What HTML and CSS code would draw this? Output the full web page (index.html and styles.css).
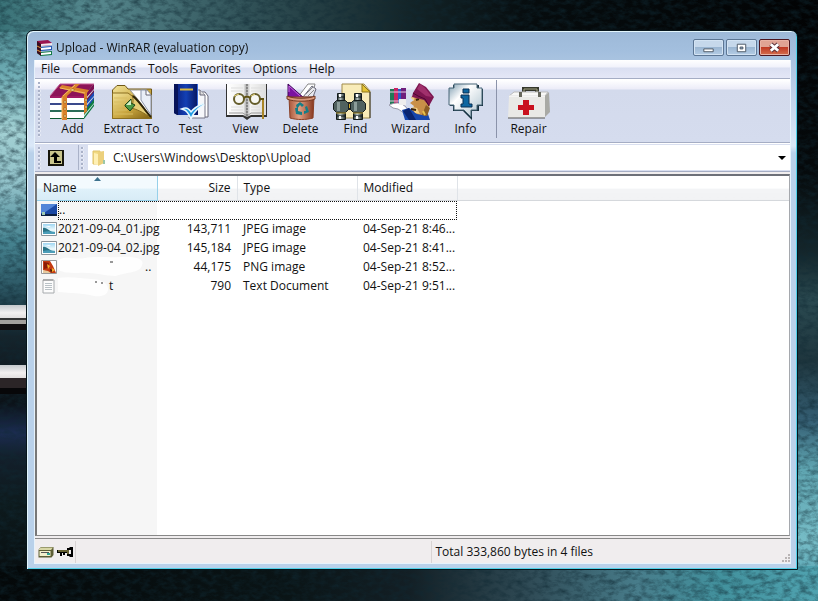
FILE: index.html
```html
<!DOCTYPE html>
<html lang="en">
<head>
<meta charset="utf-8">
<title>Upload - WinRAR (evaluation copy)</title>
<link rel="stylesheet" href="styles.css">
</head>
<body>
<svg class="wallpaper" viewBox="0 0 818 601" preserveAspectRatio="none" aria-hidden="true">
  <defs>
    <linearGradient id="wl" x1="0" y1="0" x2="0" y2="1">
      <stop offset="0" stop-color="#3a7378"/><stop offset=".05" stop-color="#4f8a91"/><stop offset=".12" stop-color="#6cabb3"/><stop offset=".22" stop-color="#a2d0d3"/><stop offset=".31" stop-color="#8fc0c8"/><stop offset=".4" stop-color="#478592"/><stop offset=".47" stop-color="#2f5c69"/><stop offset=".5" stop-color="#234652"/><stop offset=".56" stop-color="#15242c"/><stop offset=".67" stop-color="#0b1218"/><stop offset=".72" stop-color="#1b2c50"/><stop offset=".76" stop-color="#131f2b"/><stop offset=".84" stop-color="#0d1a1d"/><stop offset="1" stop-color="#05090b"/>
    </linearGradient>
    <linearGradient id="wr" x1="0" y1="0" x2="0" y2="1">
      <stop offset="0" stop-color="#020304"/><stop offset=".28" stop-color="#05090b"/><stop offset=".42" stop-color="#14262b"/><stop offset=".5" stop-color="#2a4950"/><stop offset=".6" stop-color="#1f363e"/><stop offset=".7" stop-color="#355f74"/><stop offset=".78" stop-color="#5fa5b1"/><stop offset=".9" stop-color="#76bcc6"/><stop offset="1" stop-color="#4b9aaa"/>
    </linearGradient>
    <linearGradient id="wt">
      <stop offset="0" stop-color="#3a7378"/><stop offset=".12" stop-color="#56888e"/><stop offset=".3" stop-color="#315258"/><stop offset=".5" stop-color="#132428"/><stop offset=".65" stop-color="#060c0e"/><stop offset="1" stop-color="#020304"/>
    </linearGradient>
    <linearGradient id="wb">
      <stop offset="0" stop-color="#040809"/><stop offset=".35" stop-color="#0a1416"/><stop offset=".5" stop-color="#131f25"/><stop offset=".65" stop-color="#304c57"/><stop offset=".78" stop-color="#487d8b"/><stop offset=".88" stop-color="#42919d"/><stop offset="1" stop-color="#50a3b0"/>
    </linearGradient>
    <linearGradient id="bar" x1="0" y1="0" x2="0" y2="1">
      <stop offset="0" stop-color="#c4c8cc"/><stop offset=".6" stop-color="#f2f0f0"/><stop offset="1" stop-color="#e0dede"/>
    </linearGradient>
    <filter id="grain" x="0" y="0" width="100%" height="100%" color-interpolation-filters="sRGB">
      <feTurbulence type="fractalNoise" baseFrequency=".12 .2" numOctaves="4" seed="7"/>
      <feColorMatrix values="0 0 0 0 .06  0 0 0 0 .16  0 0 0 0 .2  1.2 0 0 0 -.46"/>
    </filter>
  </defs>
  <rect width="409" height="601" fill="url(#wl)"/>
  <rect x="409" width="409" height="601" fill="url(#wr)"/>
  <rect width="818" height="32" fill="url(#wt)"/>
  <rect y="566" width="818" height="35" fill="url(#wb)"/>
  <rect width="818" height="601" filter="url(#grain)"/>
  <rect y="305" width="40" height="13" fill="url(#bar)"/>
  <rect y="318" width="40" height="2" fill="#333"/>
  <rect y="320" width="40" height="4" fill="#a3a19e"/>
  <rect y="324" width="40" height="6" fill="#110f11"/>
  <rect y="365" width="40" height="13" fill="url(#bar)"/>
  <rect y="378" width="40" height="10" fill="#2b2527"/>
  <rect y="388" width="40" height="6" fill="#070709"/>
</svg>

<svg class="defs" aria-hidden="true">
  <defs>
    <linearGradient id="gold" x1="0" y1="0" x2="1" y2="1"><stop offset="0" stop-color="#f3e49a"/><stop offset=".55" stop-color="#c9a63f"/><stop offset="1" stop-color="#7d5f12"/></linearGradient>
    <linearGradient id="blue" x1="0" y1="0" x2="1" y2="0"><stop offset="0" stop-color="#0a1c78"/><stop offset=".5" stop-color="#1440b4"/><stop offset="1" stop-color="#06145e"/></linearGradient>
    <linearGradient id="pail" x1="0" y1="0" x2="1" y2="0"><stop offset="0" stop-color="#a8563a"/><stop offset=".4" stop-color="#e0a184"/><stop offset="1" stop-color="#86371f"/></linearGradient>
    <linearGradient id="tube" x1="0" y1="0" x2="1" y2="0"><stop offset="0" stop-color="#2a3535"/><stop offset=".4" stop-color="#b9c6c3"/><stop offset="1" stop-color="#1c2424"/></linearGradient>
    <linearGradient id="steel" x1="0" y1="0" x2="1" y2="1"><stop offset="0" stop-color="#7e9db0"/><stop offset=".35" stop-color="#fff"/><stop offset="1" stop-color="#a9bfcb"/></linearGradient>
    <linearGradient id="page" x1="0" y1="0" x2="1" y2="0"><stop offset="0" stop-color="#fff"/><stop offset=".42" stop-color="#eee"/><stop offset=".5" stop-color="#aaa"/><stop offset=".6" stop-color="#f4f4f4"/><stop offset="1" stop-color="#ddd"/></linearGradient>
    <linearGradient id="sky" x1="0" y1="0" x2="0" y2="1"><stop offset="0" stop-color="#9fd6f2"/><stop offset=".6" stop-color="#eefafd"/><stop offset="1" stop-color="#b5dbe4"/></linearGradient>
    <symbol id="photo" viewBox="0 0 16 16">
      <path d="M.5 1.500h15v13H.5z" fill="#fff" stroke="#8b949b"/><path d="M2 3h12v10H2z" fill="url(#sky)"/>
      <path d="M2 7c3-1 5 2 9 4H2z" fill="#2a7386"/><path d="M2 11c3-1 8-1 12 0v2H2z" fill="#4b9db8"/><path d="M4 5h6l-2 1z" fill="#fff"/>
    </symbol>
    <symbol id="tubes" viewBox="0 0 18 28">
      <g fill="url(#tube)" stroke="#151c1c"><path d="M5.500 1.500h7v8h-7z"/><path d="M4.500 18.500h9v9h-9z"/></g>
      <path d="M4.500 8.500h9l3 3v6l-3 3h-9l-3-3v-6z" fill="#50615f" stroke="#151c1c"/>
      <path d="M5 10h3v9H5z" fill="#8b9c99"/><path d="M5 5h8M4 24h10" stroke="#0d1414"/><path d="M4 21h10" stroke="#b79b34"/><path d="M8 24v3M8 2v3" stroke="#fff" stroke-width="2"/>
    </symbol>
  </defs>
</svg>

<main class="window">
  <header class="titlebar">
    <svg class="i16" viewBox="0 0 16 16" aria-hidden="true">
      <path d="M1 1l11-1 4 3v2L5 6 1 4z" fill="#9a1450"/><path d="M5 4l11-1v2L5 6z" fill="#f3e9ee"/>
      <path d="M1 5l4 2 11-1v4L5 11 1 8z" fill="#2457b5"/><path d="M5 8l10-1v2L5 10z" fill="#fff"/>
      <path d="M1 9l4 3 11-1v4L5 16l-4-3z" fill="#137b45"/><path d="M5 13l10-1v2L5 15z" fill="#fff"/>
      <path d="M1 1l4 3v12l-4-3z" fill="#3a0d20"/><path d="M1 6l4 2M1 10l4 2" stroke="#e49a3a"/>
    </svg>
    <h1>Upload - WinRAR (evaluation copy)</h1>
    <div class="captions">
      <button class="cap" type="button" aria-label="Minimize"><svg viewBox="0 0 30 16"><path d="M10 9.500h10v3H10z" fill="#fff" stroke="#4a5563"/></svg></button>
      <button class="cap" type="button" aria-label="Maximize"><svg viewBox="0 0 30 16"><path d="M10.500 4.500h9v8h-9z" fill="#fff" stroke="#4a5563"/><path d="M13.500 7.500h3v2h-3z" fill="#93abc6" stroke="#4a5563"/></svg></button>
      <button class="cap close" type="button" aria-label="Close"><svg viewBox="0 0 30 16"><path d="M11 4.500l8 7M19 4.500l-8 7" stroke="#5a3038" stroke-width="5"/><path d="M11 4.500l8 7M19 4.500l-8 7" stroke="#fff" stroke-width="3"/></svg></button>
    </div>
  </header>

  <div class="client">
    <nav class="menu" aria-label="Menu">
      <button type="button">File</button><button type="button">Commands</button><button type="button">Tools</button><button type="button">Favorites</button><button type="button">Options</button><button type="button">Help</button>
    </nav>

    <div class="toolbar" role="toolbar" aria-label="Archive tools">
      <span class="grip"></span>
      <button class="tool" type="button">
        <svg viewBox="0 0 48 38" aria-hidden="true">
          <path d="M35 13L45 1v22L35 36z" fill="#0d7a44"/><path d="M35 13L45 1v8L35 21z" fill="#7c0d52"/><path d="M35 21L45 9v7L35 29z" fill="#1c49b8"/>
          <path d="M35 17l10-11v1L35 19zM35 24l10-11v1L35 26zM35 32l10-12v1L35 34z" fill="#cfe4df"/>
          <path d="M1 13L11 1h34L35 13z" fill="#8d1459"/><path d="M1 13L11 1h34" fill="none" stroke="#c55f96"/>
          <path d="M1 13h34v23H1z" fill="#fff"/>
          <path d="M1 13h34v2H1z" fill="#a01a66"/><path d="M1 20h34v2H1z" fill="#3a4a8c"/><path d="M1 27h34v2H1z" fill="#2a6d58"/><path d="M1 35h34v1H1z" fill="#0b5a32"/>
          <path d="M13 13L26 1h5L18 13v24h-5z" fill="#d9822b"/><path d="M10 5l3-3 27 5-2 3v18l-3 3V11z" fill="#d9822b"/><path d="M13 14v22M26 2L14 13M11 5l25 5" stroke="#f3bb63" fill="none"/>
          <path d="M15 18h2v2h-2zM15 25h2v2h-2zM15 32h2v2h-2zM22 6h3v2h-3zM36 16h2v2h-2zM36 23h2v2h-2z" fill="#fff0a0" stroke="#8a4d10" stroke-width=".5"/>
        </svg>Add</button>
      <button class="tool wide" type="button">
        <svg viewBox="0 0 48 38" aria-hidden="true">
          <path d="M4.500 35.500V7L9 2.500h8L20 6h23.500v29.500z" fill="url(#gold)" stroke="#6e5718"/>
          <path d="M22 7h16l5 5v22L28 14z" fill="#fff" stroke="#999"/><path d="M33 7h6l4 5v20L33 17z" fill="#e9eef8" stroke="#8a93a8"/><path d="M38 7v5h5" fill="#fff" stroke="#667"/>
          <path d="M4.500 35.500V10H20l4 3c8 6 12 14 19.500 22.500z" fill="url(#gold)" stroke="#8a6e20"/>
          <path d="M24 12c8 6 13 16 19 23-8-6-15-9-20-10 2-4 3-8 1-13z" fill="#e4cd76" stroke="#8a6e20"/><path d="M25 13c8 7 12 15 18 21" fill="none" stroke="#2d2408" stroke-width="2"/>
          <path d="M6 15h13M6 19h11M6 23h9M6 27h13M6 31h19" stroke="#d8bd62"/>
          <path d="M17 22l6-6v4l4 2-5 6-5-5z" fill="#4d9a46" stroke="#1e4318"/><path d="M18 22l5-5v5z" fill="#d6f0c8"/>
        </svg>Extract To</button>
      <button class="tool" type="button">
        <svg viewBox="0 0 48 38" aria-hidden="true">
          <path d="M28 9h10l3 4v21H28z" fill="#fff" stroke="#667"/><path d="M22 7h11l5 5v23H22z" fill="#f6f7fa" stroke="#778"/><path d="M33 7v5h5" fill="#ddd" stroke="#667"/>
          <path d="M7 1h24v31H10l-3-2z" fill="url(#blue)"/><path d="M7 1v29l3 2h1V1z" fill="#071358"/><path d="M10 32h14v2H10l-3-3z" fill="#cfd8ea"/>
          <path d="M13 6.500h13" stroke="#d9b942" stroke-width="2"/><path d="M30.500 1v22" stroke="#3568d8"/>
          <path d="M17 26c3 1 5 4 7 8 3-6 7-10 13-13-5 2-10 5-13 9-2-3-4-5-7-4z" fill="#44b8f0" stroke="#e9f8ff" stroke-width="3"/><path d="M17 26c3 1 5 4 7 8 3-6 7-10 13-13-5 2-10 5-13 9-2-3-4-5-7-4z" fill="#229ce4"/>
        </svg>Test</button>
      <button class="tool" type="button">
        <svg viewBox="0 0 48 38" aria-hidden="true">
          <path d="M4 1h41v33H29l-4 3-4-3H4z" fill="#333"/><path d="M5 1h39v31H29l-4 2-4-2H5z" fill="url(#page)"/>
          <path d="M7 30h14l4 3 4-3h13" fill="none" stroke="#999"/><path d="M25 1v32" stroke="#777" stroke-width="1.500" stroke-dasharray="2 1"/>
          <path d="M9 5h12M9 8h12M29 5h11M29 8h11M9 24h12M9 27h12M29 24h9M29 27h9" stroke="#ddd"/>
          <g fill="#f7f7f3" stroke="#645c2a" stroke-width="2"><circle cx="17" cy="16" r="5"/><circle cx="33" cy="16" r="5"/></g><path d="M22 15c2-2 4-2 6 0M38 16h3v12" fill="none" stroke="#5f5212" stroke-width="2"/><path d="M41 17v19" stroke="#aa8628" stroke-width="2"/><path d="M12 13l5-2M29 13l4-2" stroke="#e8d77c"/>
        </svg>View</button>
      <button class="tool" type="button">
        <svg viewBox="0 0 48 38" aria-hidden="true">
          <path d="M21 14l10-13h7l-3 13z" fill="#fff" stroke="#888"/><path d="M26 14l9-11 4 3-3 8z" fill="#e8e8ee" stroke="#667"/><path d="M29 11l7-7M31 13l6-6" stroke="#888"/>
          <path d="M11 14V1l16 14z" fill="#7a12a0" stroke="#3e0659"/><path d="M12 9v-6l11 10" fill="none" stroke="#c56be0"/>
          <path d="M12 14h25l-1 21c-7 2-16 2-23 0z" fill="url(#pail)" stroke="#8a4026"/><path d="M10 13c6 3 22 3 28 0v3c-7 3-21 3-28 0z" fill="#d8977a" stroke="#743a22"/>
          <path d="M19 22l4-3 4 3-2 2-2-2-3 4zM30 23l2 6-5 2v-3h2l-1-4zM25 32l-6-1-1-6h3v3l4 1z" fill="#157e88"/>
        </svg>Delete</button>
      <button class="tool" type="button">
        <svg viewBox="0 0 48 38" aria-hidden="true">
          <path d="M10 1h22l6 7v27H10z" fill="#f8ebb8" stroke="#a08b4a"/><path d="M30 1v8h8z" fill="#e5c434" stroke="#8d751a"/><path d="M38 9v26" stroke="#333"/>
          <path d="M16 19h5v8h-5z" fill="#222"/><path d="M17 21h3v4h-3z" fill="#d3ad32"/>
          <use href="#tubes" x="0" y="9" width="18" height="28"/><use href="#tubes" x="17" y="9" width="18" height="28"/>
        </svg>Find</button>
      <button class="tool" type="button">
        <svg viewBox="0 0 48 38" aria-hidden="true">
          <path d="M3 6h4v15H3z" fill="#1f7a55"/><path d="M7 5h4v16H7z" fill="#c72464"/><path d="M11 6h3v15h-3z" fill="#2e57c6"/><path d="M14 5h5v16h-5z" fill="#6f1f7c"/><path d="M3 9h16M3 18h10" stroke="#e6cfe3"/>
          <path d="M2 22c5-2 9-3 13-1l4 3 3 5-5 1-6-4-5-1z" fill="#fff" stroke="#99a"/><path d="M12 16h7v6h-7z" fill="#eee"/>
          <path d="M15 27l7-2 9 6 9-3 3 9H18z" fill="#1646ad"/><path d="M16 28l6 9h7l-7-12z" fill="#0a246f"/>
          <path d="M24 14l10-4 9 11-3 12-10-2-5-4 2-4-4-3 4-3z" fill="#c99048"/><path d="M24 15l4-3-1 6zM25 24l5 1 3 6-5-1z" fill="#f2cf86"/><path d="M29 17l3-1M24 26l5 1" stroke="#3a2208" stroke-width="2"/><path d="M39 22l4 3-3 8-5-1z" fill="#8b5d24"/><path d="M36 28l2 4" stroke="#e7c14c" stroke-width="2"/>
          <path d="M26 10L32 0l7 4 8 10-5 9-5-6-12-3z" fill="#7d1650"/><path d="M30 6l3-5 5 4 7 9-6-1z" fill="#a0306c"/><path d="M26 10l5 3 7 3 4 7" fill="none" stroke="#4a082f"/>
        </svg>Wizard</button>
      <button class="tool" type="button">
        <svg viewBox="0 0 48 38" aria-hidden="true">
          <path d="M11 2h26v4h4v17h-4v5H30v9l-9-9H11v-5H8V6h3z" fill="#17313f"/><path d="M12 1h23v4h5v17h-5v5h-6v7l-7-7H12v-5H7V5h5z" fill="url(#steel)" stroke="#496778"/>
          <path d="M21 6h6v4h-6zM19 12h8v9h3v3H19v-3h2v-6h-2z" fill="#0d66a0" stroke="#082f52"/>
        </svg>Info</button>
      <span class="rule"></span>
      <button class="tool" type="button">
        <svg viewBox="0 0 48 38" aria-hidden="true">
          <path d="M19 12V6h13v6" fill="none" stroke="#35382c" stroke-width="4"/><path d="M19 11V6h13v5" fill="none" stroke="#a5a383"/>
          <path d="M4 13l5-4h34l-3 4z" fill="#f9f9f7" stroke="#bbb"/><path d="M40 13l4-4 1 20-6 6z" fill="#a9aaa5"/><path d="M4 13h36v22H3z" fill="#e9e9e6"/><path d="M4 13h36" stroke="#fff"/><path d="M3 35h37" stroke="#555"/><path d="M14 9h3v5h-3zM33 9h3v5h-3z" fill="#67685d"/>
          <path d="M18 17h6v5h5v5h-5v5h-6v-5h-5v-5h5z" fill="#c9111e"/>
        </svg>Repair</button>
    </div>

    <div class="address">
      <span class="grip"></span>
      <button class="up" type="button" aria-label="Up one level"><svg class="i16" viewBox="0 0 16 16"><path d="M0 0h16v16H0z" fill="#17160c"/><path d="M2 1h12v13H2z" fill="#c9c58c"/><path d="M7 2l5 5H9v4h4v2H6V7H2z" fill="#000"/></svg></button>
      <span class="grip second"></span>
      <div class="combo">
        <svg class="i16" viewBox="0 0 16 16" aria-hidden="true"><path d="M2 1h7v13H2z" fill="#f1d981" stroke="#dfc26a"/><path d="M7 2l6-1v12l-6 3z" fill="#ecd07c"/><path d="M3 3l4 1v11l-4-1z" fill="#fff0b4"/><path d="M12 10h2v4h-2z" fill="#9cc7a8"/></svg>
        <select aria-label="Path"><option>C:\Users\Windows\Desktop\Upload</option></select>
        <svg class="drop" viewBox="0 0 8 4" aria-hidden="true"><path d="M0 0h8L4 4z"/></svg>
      </div>
    </div>

    <section class="list">
      <table>
        <colgroup><col class="c-name"><col class="c-size"><col class="c-type"><col class="c-mod"><col></colgroup>
        <thead><tr><th class="sorted">Name<svg class="arrow" viewBox="0 0 7 4" aria-hidden="true"><path d="M0 4l3.500-4L7 4z" fill="#3d728e"/></svg></th><th class="num">Size</th><th>Type</th><th>Modified</th><th></th></tr></thead>
        <tbody>
          <tr><td colspan="4"><div class="file"><svg class="i16" viewBox="0 0 16 16" aria-hidden="true"><path d="M0 2h16v12H0z" fill="#1b49a5"/><path d="M0 2h16L3 11H0z" fill="#5285d8"/><path d="M0 12h16v2H0z" fill="#0b2044"/><path d="M1 10h3v3H1z" fill="#9fcbb4"/></svg><span class="focus">..</span></div></td><td></td></tr>
          <tr><td><div class="file"><svg class="i16"><use href="#photo"/></svg>2021-09-04_01.jpg</div></td><td class="num">143,711</td><td>JPEG image</td><td>04-Sep-21 8:46...</td><td></td></tr>
          <tr><td><div class="file"><svg class="i16"><use href="#photo"/></svg>2021-09-04_02.jpg</div></td><td class="num">145,184</td><td>JPEG image</td><td>04-Sep-21 8:41...</td><td></td></tr>
          <tr><td><div class="file"><svg class="i16" viewBox="0 0 16 16" aria-hidden="true"><path d="M.5 1.500h15v13H.5z" fill="#fff" stroke="#999"/><path d="M2 2h7l3 5 3 7H7l-5-3z" fill="#c43b12"/><path d="M3 3l5 1-1 5-4 1z" fill="#8a1c08"/><path d="M6 5l3 2-2 3zM11 9l3 2-3 2z" fill="#f3ae2a"/><path d="M2 11l5 1 3 2H2z" fill="#e7cba0"/><path d="M9 10l2 1-1 3z" fill="#28160c"/></svg><svg class="smudge" viewBox="0 0 86 24" aria-hidden="true"><path d="M0 5c9-5 16 0 27-2s22 0 36-1c13-1 24 2 21 8-1 8-16 7-26 11-12 0-22-4-38-3C9 18 2 17 0 14z" fill="#fefefe"/><path d="M52 7h3" stroke="#333"/></svg>..</div></td><td class="num">44,175</td><td>PNG image</td><td>04-Sep-21 8:52...</td><td></td></tr>
          <tr><td><div class="file"><svg class="i16" viewBox="0 0 16 16" aria-hidden="true"><path d="M2 2h11v13H2z" fill="#fcfcfc" stroke="#a6aaad"/><path d="M3 1v2M5 1v2M7 1v2M9 1v2M11 1v2" stroke="#888"/><path d="M4 5.500h7M4 7.500h7M4 9.500h7M4 11.500h7" stroke="#b9c1c6"/></svg><svg class="smudge short" viewBox="0 0 50 24" aria-hidden="true"><path d="M0 4c10-2 22 0 33 1 8 0 17 3 17 10 0 6-6 8-14 7C25 19 12 19 0 18z" fill="#fefefe"/><path d="M37 8h2M43 9h2" stroke="#333"/></svg>t</div></td><td class="num">790</td><td>Text Document</td><td>04-Sep-21 9:51...</td><td></td></tr>
        </tbody>
      </table>
    </section>

    <footer class="status">
      <div class="cell icons">
        <svg class="i16" viewBox="0 0 16 16" aria-hidden="true"><path d="M1 5l2-2h12.500v8l-2 2.500H.5V6z" fill="#5d5e35"/><path d="M1 5l2-1.500h12L13 6H1z" fill="#d8d7a6"/><path d="M1.500 7h11v5h-11z" fill="#f2f0cd"/><path d="M3 8.500h8" stroke="#555"/><path d="M9 9h3v2H9z" fill="#2fa593"/></svg>
        <svg class="i16" viewBox="0 0 16 16" aria-hidden="true"><path d="M0 6h10V4h2l1-1h3v10h-3l-1-1h-2V9H8v2H6V9H5v3H3V9H0z" fill="#000"/><path d="M1 7h9M11 6v4" stroke="#c9bf62"/><path d="M12 6h2v4h-2z" fill="#f0eded"/></svg>
      </div>
      <div class="cell"></div>
      <div class="cell total">Total 333,860 bytes in 4 files</div>
      <svg class="resize" viewBox="0 0 8 8" aria-hidden="true"><path d="M6 0h2v2H6zM3 3h2v2H3zM6 3h2v2H6zM0 6h2v2H0zM3 6h2v2H3zM6 6h2v2H6z" fill="#b9b4b4"/></svg>
    </footer>
  </div>
</main>
</body>
</html>
```
FILE: styles.css
```css
* { box-sizing: border-box; }

body {
  margin: 0;
  min-height: 100vh;
  padding: 30px 20px 31px 26px;
  display: flex;
  background: #0a1214;
  color: #111;
  font: 12px/16px "Open Sans", "Noto Sans", sans-serif;
}

button, select { font: inherit; color: inherit; border: 0; padding: 0; background: none; }
svg { display: block; flex: none; }
.defs { position: absolute; width: 0; height: 0; }
.wallpaper { position: fixed; inset: 0; width: 100%; height: 100%; z-index: -1; }
.i16 { width: 16px; height: 16px; }

.window {
  flex: 1;
  min-width: 0;
  display: flex;
  flex-direction: column;
  padding: 0 6px 5px 7px;
  border: 1px solid #06151b;
  border-radius: 7px 7px 0 0;
  background: linear-gradient(#9db9d8 0, #a3bfde 20px, #bdd0e8 60px, #dbe8f8 115px, #b9d1ea 122px, #b9d1ea);
  box-shadow: inset 1px 1px #e2f5fc, inset -1px -1px #4fd0e8;
}

/* Title bar */
.titlebar { display: flex; align-items: center; gap: 4px; height: 29px; padding: 4px 1px 0 2px; }
.titlebar h1 { flex: 1; margin: 0; font-size: 12px; font-weight: 400; white-space: nowrap; }
.captions { display: flex; gap: 2px; }
.cap {
  width: 31px;
  height: 17px;
  border: 1px solid #5c7694;
  border-radius: 2px;
  background: linear-gradient(#c6d8eb 45%, #9bb6d2 50%, #b4cde6);
  box-shadow: inset 0 0 0 1px #d3e3f3;
}
.cap svg { width: 100%; height: 100%; }
.close {
  border-color: #4c1620;
  background: linear-gradient(#e0a394 45%, #c03a25 50%, #d4704f);
  box-shadow: inset 0 0 0 1px #e9b2a4;
}

.client { flex: 1; display: flex; flex-direction: column; border: 1px solid #e6f2fb; border-top: 0; background: #f0edee; }

/* Menu */
.menu { display: flex; gap: 12px; height: 19px; padding: 0 6px; background: linear-gradient(#fff 0, #f1f2fb 7px, #dadff1 8px, #e4e7f6); border-bottom: 1px solid #a5adc4; }

/* Toolbar */
.toolbar { display: flex; height: 64px; padding-bottom: 4px; border-top: 1px solid #fff; border-bottom: 1px solid #a5adc4; background: linear-gradient(#fff 0, #ececf8 9px, #d3daec 10px, #d5dcee); }
.grip { width: 3px; margin: 2px 4px 0 3px; background: radial-gradient(circle at 1px 1px, #aab2c8 1px, #fff 1px, #fff0 2px) 0 0 / 3px 4px; }
.tool { width: 55px; display: flex; flex-direction: column; align-items: center; padding-top: 3px; white-space: nowrap; }
.tool svg { width: 48px; height: 38px; }
.wide { width: 63px; }
.rule { width: 1px; margin: 0 4px 0 3px; background: #8b93aa; }

/* Address bar */
.address { display: flex; height: 29px; border-top: 1px solid #fff; border-bottom: 1px solid #a5adc4; background: #d9dff0; padding: 1px 0; }
.up { width: 34px; padding: 0 0 0 3px; border-right: 1px solid #aab2c8; }
.address .grip { margin-bottom: 1px; }
.second { margin-left: 2px; }
.combo { flex: 1; display: flex; align-items: center; gap: 6px; padding: 0 4px 0 3px; background: #fff; }
.combo select { flex: 1; appearance: none; height: 20px; outline: 0; }
.drop { width: 8px; height: 4px; }

/* File list */
.list { flex: 1; margin-top: 2px; border: 1px solid #777; border-width: 2px 1px 1px 2px; border-color: #6d7078 #a5a8ad #888 #777; background: linear-gradient(90deg, #f6f6f6 120px, #fff 120px); }
table { width: 100%; table-layout: fixed; border-collapse: collapse; }
.c-name, .c-type { width: 120px; }
.c-size { width: 80px; }
.c-mod { width: 100px; }
th, td { padding: 0 6px; text-align: left; font-weight: 400; white-space: nowrap; }
th { position: relative; height: 24px; background: linear-gradient(#fff 50%, #f3f4f6 55%, #f1f2f4); border-right: 1px solid #dfe3e8; border-bottom: 1px solid #d5d8dc; }
th:last-child { border-right: 0; }
.sorted { background: linear-gradient(#f3fafe 50%, #dff1fa 55%, #d8ecf6); border-color: #96d0ea; }
.arrow { position: absolute; top: 1px; left: 57px; width: 7px; height: 4px; }
td { height: 19px; }
td:first-child { padding: 0 0 0 4px; }
.num { text-align: right; }
.file { display: flex; align-items: center; gap: 1px; height: 19px; }
.focus { flex: 1; height: 19px; border: 1px dotted #111; }
.smudge { width: 86px; height: 24px; }
.short { width: 50px; }

/* Status bar */
.status { position: relative; display: flex; height: 25px; margin-top: 2px; padding: 2px 0 0; border-top: 1px solid #888; }
.cell { flex: 1; border-right: 1px solid #d8d4d4; }
.icons { flex: none; width: 41px; display: flex; align-items: center; gap: 3px; padding-left: 3px; }
.total { border: 0; padding-left: 4px; line-height: 22px; }
.resize { position: absolute; right: 0; bottom: 1px; width: 8px; height: 8px; }
```
